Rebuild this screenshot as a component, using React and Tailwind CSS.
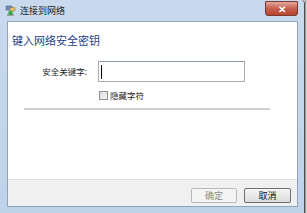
import React from "react";

const font = { fontFamily: '"Noto Sans CJK SC", "Liberation Sans", sans-serif' };

const NetIcon = () => (
  <svg width="11" height="11" viewBox="0 0 11 11">
    <rect x="1" y="1" width="6" height="4" rx="0.5" fill="#6d8fb8" stroke="#3c5a80" strokeWidth="0.6" />
    <rect x="5" y="2.5" width="5" height="3.5" rx="0.5" fill="#e8c060" stroke="#9a7a30" strokeWidth="0.6" />
    <circle cx="5.5" cy="8" r="2.3" fill="#3aa64a" />
    <rect x="2" y="9.5" width="7" height="1" fill="#5a7a5a" />
  </svg>
);

export default function App() {
  return (
    <div className="flex w-[307px] h-[213px] bg-[#d6d6d6]" style={font}>
      <div className="flex flex-col w-[305px] h-full bg-gradient-to-b from-[#c9daee] to-[#bfd2e9] border-r border-[#4a4f57] rounded-tr-[4px]">
        <div className="flex items-start justify-between h-[21px] pl-[5px] pr-[6px]">
          <div className="flex items-center gap-[4px] h-[20px]">
            <NetIcon />
            <span className="text-[9px] leading-none text-[#1c1c1c]">连接到网络</span>
          </div>
          <div className="mt-[1px] flex items-center justify-center w-[33px] h-[15px] rounded-b-[3px] border border-[#7a3a32] bg-gradient-to-b from-[#e2a99f] via-[#c75f50] to-[#b8442f]">
            <span className="text-[10px] leading-none font-bold text-white">✕</span>
          </div>
        </div>
        <div className="flex flex-col flex-1 ml-[7px] mr-[6px] mb-[6px] border border-[#8fa4c0]">
          <div className="flex flex-col flex-1 bg-white pl-[4px] pt-[11px]">
            <div className="text-[11px] leading-[14px] text-[#1e3f8a]">键入网络安全密钥</div>
            <div className="flex items-center mt-[14px]">
              <div className="w-[75px] text-right text-[8.5px] text-[#1c1c1c]">安全关键字:</div>
              <div className="ml-[11px] flex items-center w-[147px] h-[21px] border border-[#abadb3] border-t-[#8e9bad] bg-white pl-[2px]">
                <div className="w-px h-[14px] bg-black" />
              </div>
            </div>
            <div className="flex items-center gap-[2px] ml-[87px] mt-[9px]">
              <div className="w-[9px] h-[9px] border border-[#8f8f8f] bg-gradient-to-br from-[#dcdcdc] to-[#f6f6f6]" />
              <span className="text-[8.5px] leading-none text-[#1c1c1c]">隐藏字符</span>
            </div>
            <div className="ml-[12px] mt-[8px] w-[246px] h-[2px] bg-[#cdcdcd]" />
          </div>
          <div className="flex justify-end items-start gap-[7px] h-[27px] pt-[8px] pr-[6px] bg-[#f0f0f0] border-t border-[#dfdfdf]">
            <div className="flex items-center justify-center w-[46px] h-[15px] rounded-[2px] border border-[#b5b9bd] bg-[#f4f4f4] text-[9px] text-[#8a8a8a]">确定</div>
            <div className="flex items-center justify-center w-[47px] h-[15px] rounded-[2px] border border-[#6f6f6f] bg-gradient-to-b from-[#f5f5f5] to-[#dcdcdc] text-[9px] text-[#111]">取消</div>
          </div>
        </div>
      </div>
      <div className="w-[1px] h-full bg-[#9a9a9a]" />
    </div>
  );
}
